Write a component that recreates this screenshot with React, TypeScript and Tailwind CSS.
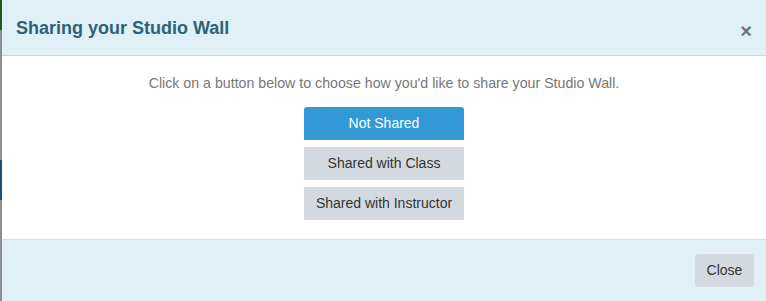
import React from "react";

export default function App() {
  return (
    <div className="flex h-[301px] w-[766px] overflow-hidden bg-white" style={{ fontFamily: '"Liberation Sans", Arial, sans-serif' }}>
      <div className="flex w-[2px] flex-col">
        <div className="h-[30px] bg-[#1f5a1f]" />
        <div className="h-[130px] bg-[#8a8f93]" />
        <div className="h-[40px] bg-[#1d4f6e]" />
        <div className="flex-1 bg-[#8a8f93]" />
      </div>
      <div className="flex flex-1 flex-col">
        <div className="flex h-[56px] items-center justify-between border-b border-[#c8d8df] bg-[#dff0f7] pl-[14px] pr-[14px]">
          <h2 className="mt-[1px] text-[18px] font-bold text-[#2f6274]">Sharing your Studio Wall</h2>
          <span className="mt-[7px] text-[20px] font-bold leading-none text-[#6b7378]">×</span>
        </div>
        <div className="flex flex-1 flex-col items-center bg-white pt-[17px]">
          <p className="text-[14.2px] leading-[20px] text-[#777777]">
            Click on a button below to choose how you'd like to share your Studio Wall.
          </p>
          <div className="mt-[14px] flex flex-col gap-[7px]">
            <button className="h-[33px] w-[160px] rounded-t-[3px] bg-[#3399d6] text-[14px] text-white">Not Shared</button>
            <button className="h-[33px] w-[160px] bg-[#d4d9e0] text-[14px] text-[#333333]">Shared with Class</button>
            <button className="h-[33px] w-[160px] bg-[#d4d9e0] text-[14px] text-[#333333]">Shared with Instructor</button>
          </div>
        </div>
        <div className="flex h-[62px] items-start justify-end border-t border-[#d0dde3] bg-[#dff0f7] pr-[12px] pt-[14px]">
          <button className="h-[33px] w-[59px] rounded-[3px] bg-[#d4d9e0] text-[14px] text-[#333333]">Close</button>
        </div>
      </div>
    </div>
  );
}
